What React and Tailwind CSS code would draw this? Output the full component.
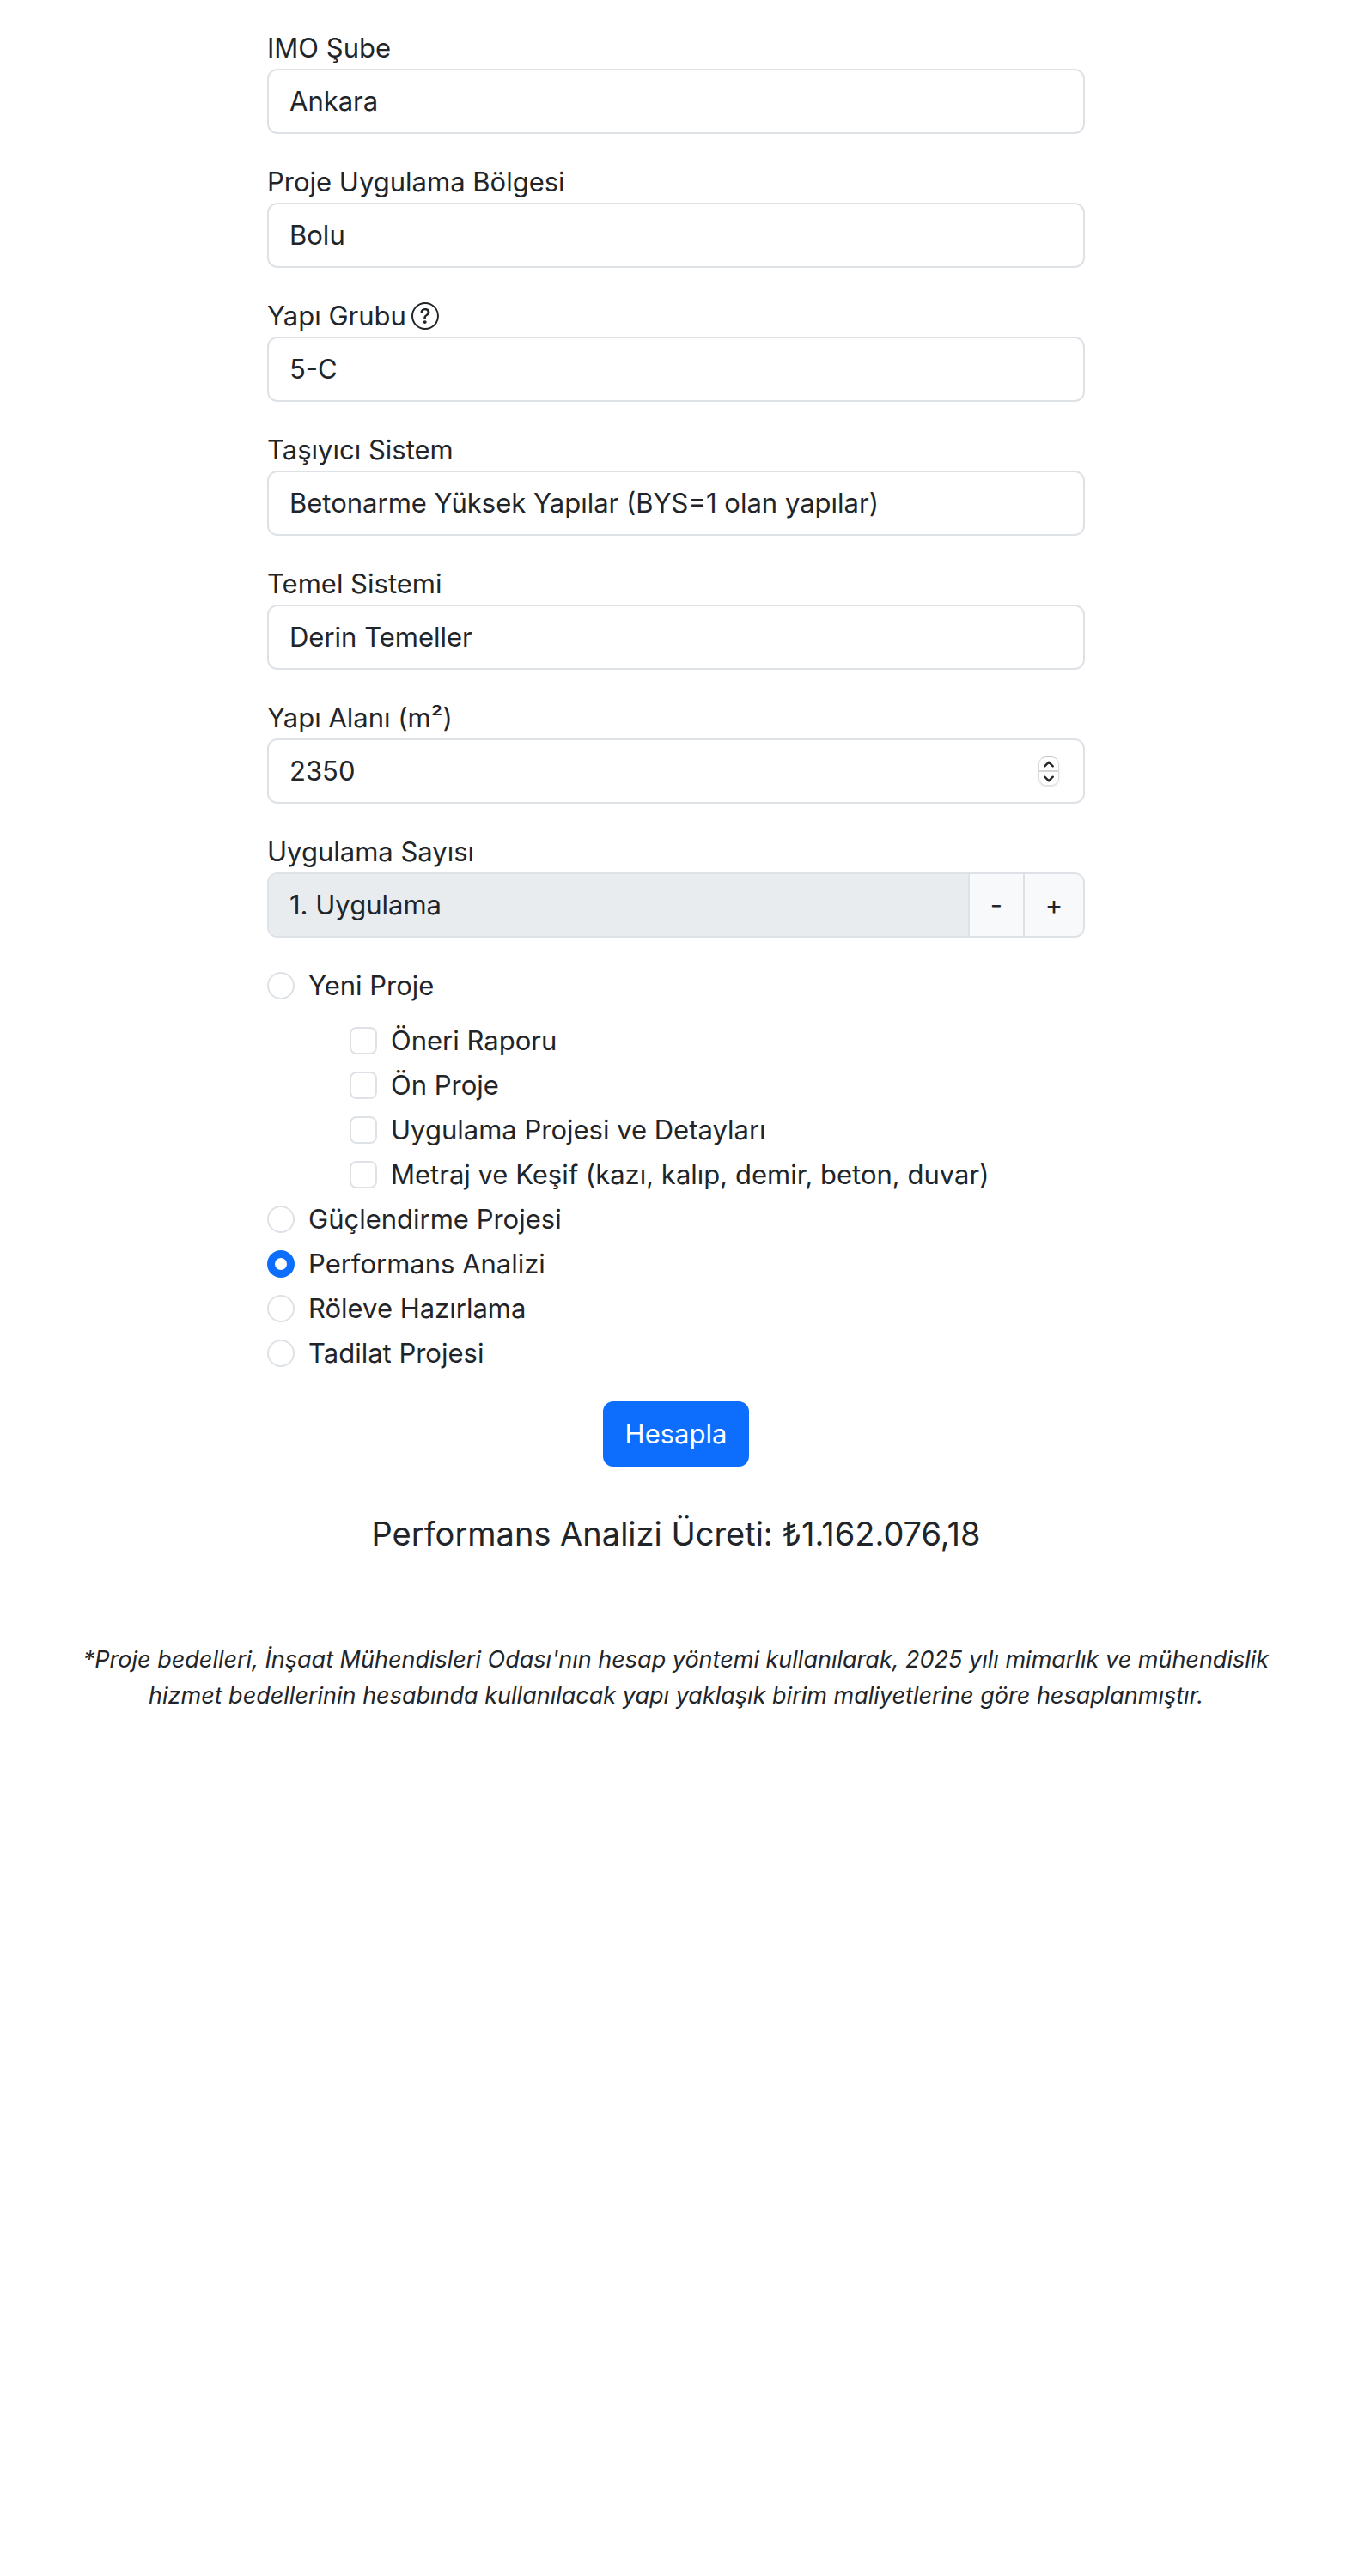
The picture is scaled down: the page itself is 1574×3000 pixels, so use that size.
import { useState } from "react";
import { BsQuestionCircle } from "react-icons/bs";

const controlClass =
  "block h-[76px] w-full appearance-none rounded-xl border-2 border-[#dee2e6] bg-white px-6 leading-[48px] text-[#212529] outline-none focus:border-[#86b7fe]";

function SelectField({ id, label, options, hint }) {
  return (
    <div>
      <label htmlFor={id} className="flex items-center gap-1.5">
        {label}
        {hint && <BsQuestionCircle className="size-8" title={hint} />}
      </label>
      <select id={id} className={controlClass}>
        {options.map((option) => (
          <option key={option}>{option}</option>
        ))}
      </select>
    </div>
  );
}

function AreaField() {
  const [area, setArea] = useState(2350);
  return (
    <div>
      <label htmlFor="area" className="block">
        Yapı Alanı (m²)
      </label>
      <div className="flex h-[76px] items-center rounded-xl border-2 border-[#dee2e6] pr-7 focus-within:border-[#86b7fe]">
        <input
          id="area"
          type="number"
          value={area}
          onChange={(e) => setArea(Number(e.target.value))}
          className="min-w-0 flex-1 appearance-none bg-transparent pl-6 leading-[48px] outline-none [-moz-appearance:textfield] [&::-webkit-inner-spin-button]:appearance-none"
        />
        <div className="flex h-[34px] w-6 flex-col divide-y-2 divide-[#d5d5d5] overflow-hidden rounded-[9px] border border-[#dcdcdc] border-t-[#c4c4c4] shadow-sm">
          <button
            type="button"
            aria-label="Artır"
            onClick={() => setArea(area + 1)}
            className="flex flex-1 items-center justify-center"
          >
            <svg viewBox="0 0 12 8" className="h-2 w-3" fill="none" stroke="#262626" strokeWidth="2.4" strokeLinecap="round" strokeLinejoin="round">
              <path d="M1.3 6.3 6 1.7l4.7 4.6" />
            </svg>
          </button>
          <button
            type="button"
            aria-label="Azalt"
            onClick={() => setArea(area - 1)}
            className="flex flex-1 items-center justify-center"
          >
            <svg viewBox="0 0 12 8" className="h-2 w-3" fill="none" stroke="#262626" strokeWidth="2.4" strokeLinecap="round" strokeLinejoin="round">
              <path d="M1.3 1.7 6 6.3l4.7-4.6" />
            </svg>
          </button>
        </div>
      </div>
    </div>
  );
}

function CountField() {
  const [count, setCount] = useState(1);
  return (
    <div>
      <label htmlFor="count" className="block">
        Uygulama Sayısı
      </label>
      <div className="flex h-[76px] divide-x-2 divide-[#dee2e6] overflow-hidden rounded-xl border-2 border-[#dee2e6]">
        <input
          id="count"
          type="text"
          readOnly
          value={`${count}. Uygulama`}
          className="min-w-0 flex-1 bg-[#e9ecef] px-6 leading-[48px] outline-none"
        />
        <button
          type="button"
          onClick={() => setCount(Math.max(1, count - 1))}
          className="w-16 shrink-0 bg-[#f8f9fa]"
        >
          -
        </button>
        <button
          type="button"
          onClick={() => setCount(count + 1)}
          className="w-[68px] shrink-0 bg-[#f8f9fa]"
        >
          +
        </button>
      </div>
    </div>
  );
}

function RadioRow({ label, defaultChecked }) {
  return (
    <label className="flex items-center gap-4">
      <input
        type="radio"
        name="service"
        defaultChecked={defaultChecked}
        className="size-8 shrink-0 appearance-none rounded-full border-2 border-[#dee2e6] bg-white checked:border-[9px] checked:border-[#0d6efd]"
      />
      {label}
    </label>
  );
}

function CheckRow({ label }) {
  return (
    <label className="flex items-center gap-4">
      <input
        type="checkbox"
        className="size-8 shrink-0 appearance-none rounded-lg border-2 border-[#dee2e6] bg-white checked:border-[#0d6efd] checked:bg-[#0d6efd]"
      />
      {label}
    </label>
  );
}

export default function App() {
  return (
    <main className="flex flex-col items-center bg-white px-6 pt-8 pb-8 font-['Inter','Liberation_Sans',sans-serif] text-[31px] leading-[48px] text-[#212529]">
      <form className="flex w-full max-w-[952px] flex-col gap-8" onSubmit={(e) => e.preventDefault()}>
        <SelectField id="branch" label="IMO Şube" options={["Ankara"]} />
        <SelectField id="region" label="Proje Uygulama Bölgesi" options={["Bolu"]} />
        <SelectField id="group" label="Yapı Grubu" hint="Yapı Grubu" options={["5-C"]} />
        <SelectField
          id="structure"
          label="Taşıyıcı Sistem"
          options={["Betonarme Yüksek Yapılar (BYS=1 olan yapılar)"]}
        />
        <SelectField id="foundation" label="Temel Sistemi" options={["Derin Temeller"]} />
        <AreaField />
        <CountField />

        <div className="flex flex-col gap-1">
          <RadioRow label="Yeni Proje" />
          <div className="mt-3 flex flex-col gap-1 pl-24">
            <CheckRow label="Öneri Raporu" />
            <CheckRow label="Ön Proje" />
            <CheckRow label="Uygulama Projesi ve Detayları" />
            <CheckRow label="Metraj ve Keşif (kazı, kalıp, demir, beton, duvar)" />
          </div>
          <RadioRow label="Güçlendirme Projesi" />
          <RadioRow label="Performans Analizi" defaultChecked />
          <RadioRow label="Röleve Hazırlama" />
          <RadioRow label="Tadilat Projesi" />
        </div>

        <button
          type="submit"
          className="h-[76px] self-center rounded-xl bg-[#0d6efd] px-[26px] text-white"
        >
          Hesapla
        </button>
      </form>

      <h1 className="mt-[54px] text-center text-[38px] leading-[48px] font-normal">
        Performans Analizi Ücreti: ₺1.162.076,18
      </h1>

      <p className="mt-[102px] max-w-[1420px] text-center text-[27px] leading-[42px] italic">
        *Proje bedelleri, İnşaat Mühendisleri Odası'nın hesap yöntemi kullanılarak, 2025 yılı mimarlık ve
        mühendislik hizmet bedellerinin hesabında kullanılacak yapı yaklaşık birim maliyetlerine göre
        hesaplanmıştır.
      </p>
    </main>
  );
}
